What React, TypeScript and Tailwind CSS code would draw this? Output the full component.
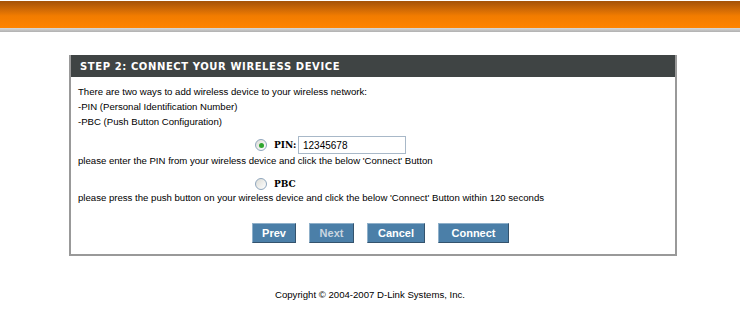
import React from "react";

function Radio({ checked }: { checked?: boolean }) {
  return (
    <span className="flex h-[12px] w-[12px] items-center justify-center rounded-full border border-[#8fa6bd] bg-gradient-to-br from-[#dcdcd6] to-white">
      {checked && <span className="h-[5px] w-[5px] rounded-full bg-[#2ea52e]" />}
    </span>
  );
}

function Btn({ label, w, disabled }: { label: string; w: string; disabled?: boolean }) {
  return (
    <button
      type="button"
      className={`${w} h-[20px] border border-t-[#8fb0ca] border-l-[#8fb0ca] border-b-[#34536d] border-r-[#34536d] bg-[#4b7fa8] text-[11px] font-bold leading-none ${
        disabled ? "text-[#c9d6e0]" : "text-white"
      }`}
    >
      {label}
    </button>
  );
}

export default function App() {
  return (
    <div className="min-h-[317px] w-[740px] bg-white font-['Liberation_Sans',Tahoma,sans-serif] text-black">
      <div className="h-[1px] bg-white" />
      <div className="h-[27px] bg-gradient-to-b from-[#a45208] via-[#f27c00] via-55% to-[#ff8400]" />
      <div className="h-[4px] bg-gradient-to-b from-[#d8d8d8] to-[#b0b0b0]" />

      <div className="ml-[69px] mt-[23px] w-[608px] border-2 border-t-0 border-[#999]">
        <div className="flex h-[22px] items-center bg-[#3f4444] px-[9px] font-['DejaVu_Sans',Verdana,sans-serif] text-[10px] font-bold tracking-[0.6px] text-white">
          STEP 2: CONNECT YOUR WIRELESS DEVICE
        </div>

        <div className="px-[7px] pb-[11px] pt-[7px] text-[9.6px] leading-[15px]">
          <p>There are two ways to add wireless device to your wireless network:</p>
          <p>-PIN (Personal Identification Number)</p>
          <p>-PBC (Push Button Configuration)</p>

          <div className="ml-[177px] mt-[7px] flex h-[18px] items-center">
            <Radio checked />
            <span className="ml-[7px] w-[24px] font-['DejaVu_Serif',Georgia,serif] text-[9px] font-bold">PIN:</span>
            <input
              readOnly
              value="12345678"
              className="h-[18px] w-[108px] border border-[#a8b8c8] px-[4px] text-[10px] outline-none"
            />
          </div>
          <p className="leading-[14px]">please enter the PIN from your wireless device and click the below 'Connect' Button</p>

          <div className="ml-[177px] mt-[9px] flex h-[14px] items-center">
            <Radio />
            <span className="ml-[7px] font-['DejaVu_Serif',Georgia,serif] text-[9px] font-bold">PBC</span>
          </div>
          <p className="leading-[14px]">
            please press the push button on your wireless device and click the below 'Connect' Button within 120 seconds
          </p>

          <div className="ml-[174px] mt-[18px] flex gap-[13px]">
            <Btn label="Prev" w="w-[44px]" />
            <Btn label="Next" w="w-[45px]" disabled />
            <Btn label="Cancel" w="w-[58px]" />
            <Btn label="Connect" w="w-[71px]" />
          </div>
        </div>
      </div>

      <p className="mt-[32px] text-center text-[9.6px] leading-[14px]">
        Copyright © 2004-2007 D-Link Systems, Inc.
      </p>
    </div>
  );
}
